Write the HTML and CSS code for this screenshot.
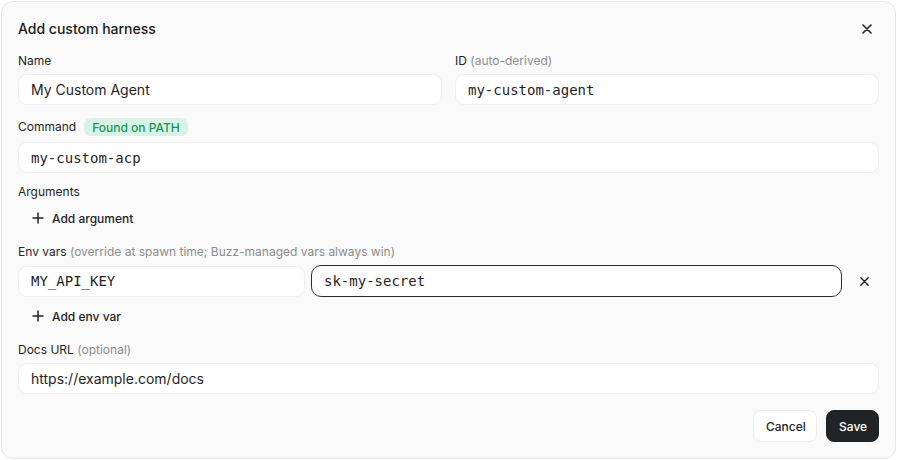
FILE: index.html
```html
<!DOCTYPE html>
<html lang="en">
<head>
<meta charset="utf-8">
<title>Add custom harness</title>
<link rel="stylesheet" href="styles.css">
</head>
<body>
<div class="dialog">
  <div class="header">
    <h2 class="title">Add custom harness</h2>
    <button class="icon-btn close" aria-label="Close">
      <svg width="10" height="10" viewBox="0 0 10 10"><path d="M1 1L9 9M9 1L1 9" stroke="#1f2328" stroke-width="1.6" stroke-linecap="round"/></svg>
    </button>
  </div>

  <div class="row-2 sec-name">
    <div class="field">
      <div class="label-row"><span class="label">Name</span></div>
      <div class="input">My Custom Agent</div>
    </div>
    <div class="field">
      <div class="label-row"><span class="label">ID <span class="muted">(auto-derived)</span></span></div>
      <div class="input mono">my-custom-agent</div>
    </div>
  </div>

  <div class="field sec-command">
    <div class="label-row badge-row"><span class="label">Command</span><span class="badge">Found on PATH</span></div>
    <div class="input mono">my-custom-acp</div>
  </div>

  <div class="field sec-args">
    <div class="label-row"><span class="label">Arguments</span></div>
    <button class="add-btn">
      <svg width="12" height="12" viewBox="0 0 12 12"><path d="M6 0.5V11.5M0.5 6H11.5" stroke="#1f2328" stroke-width="1.5"/></svg>
      <span>Add argument</span>
    </button>
  </div>

  <div class="field sec-env">
    <div class="label-row"><span class="label">Env vars <span class="muted">(override at spawn time; Buzz-managed vars always win)</span></span></div>
    <div class="env-row">
      <div class="input mono env-key">MY_API_KEY</div>
      <div class="input mono env-val focused">sk-my-secret</div>
      <button class="icon-btn remove" aria-label="Remove">
        <svg width="9" height="9" viewBox="0 0 9 9"><path d="M0.8 0.8L8.2 8.2M8.2 0.8L0.8 8.2" stroke="#1f2328" stroke-width="1.4" stroke-linecap="round"/></svg>
      </button>
    </div>
    <button class="add-btn add-env">
      <svg width="12" height="12" viewBox="0 0 12 12"><path d="M6 0.5V11.5M0.5 6H11.5" stroke="#1f2328" stroke-width="1.5"/></svg>
      <span>Add env var</span>
    </button>
  </div>

  <div class="field sec-docs">
    <div class="label-row"><span class="label">Docs URL <span class="muted">(optional)</span></span></div>
    <div class="input">https://example.com/docs</div>
  </div>

  <div class="footer">
    <button class="btn btn-secondary">Cancel</button>
    <button class="btn btn-primary">Save</button>
  </div>
</div>
</body>
</html>
```

FILE: styles.css
```css
* { box-sizing: border-box; }

html, body {
  margin: 0;
  padding: 0;
  background: #ffffff;
}

body {
  font-family: Inter, "Liberation Sans", sans-serif;
  color: #1f2328;
}

.dialog {
  margin: 1px 1px 1px 1px;
  height: 458px;
  border: 1px solid #e6e6e6;
  border-radius: 12px;
  background: #fafafa;
  padding: 17px 16px 16px 16px;
  display: flex;
  flex-direction: column;
}

.header {
  display: flex;
  align-items: center;
  justify-content: space-between;
  height: 20px;
}

.title {
  margin: 0;
  font-size: 14px;
  line-height: 20px;
  font-weight: 500;
  color: #1a1a1a;
}

.icon-btn {
  border: 0;
  background: transparent;
  padding: 0;
  display: flex;
  align-items: center;
  justify-content: center;
  cursor: pointer;
}

.close {
  width: 24px;
  height: 24px;
  margin-right: 0;
}

.row-2 {
  display: grid;
  grid-template-columns: 1fr 1fr;
  column-gap: 13px;
}

.field {
  display: flex;
  flex-direction: column;
}

.sec-name { margin-top: 14px; }
.sec-command { margin-top: 13px; }
.sec-args { margin-top: 11px; }
.sec-env { margin-top: 12px; }
.sec-docs { margin-top: 12px; }

.label-row {
  display: flex;
  align-items: center;
  height: 16px;
  margin-bottom: 5px;
}

.badge-row {
  height: 18px;
  margin-bottom: 6px;
  gap: 8px;
}

.label {
  font-size: 12px;
  line-height: 16px;
  color: #262626;
  white-space: nowrap;
}

.muted {
  color: #8c8c8c;
}

.badge {
  display: inline-flex;
  align-items: center;
  height: 18px;
  padding: 0 8px;
  border-radius: 7px;
  background: #d8f3e5;
  color: #17945b;
  font-size: 12px;
  font-weight: 500;
}

.input {
  height: 31px;
  border: 1px solid #efefef;
  border-radius: 9px;
  background: #ffffff;
  padding: 0 12px;
  display: flex;
  align-items: center;
  font-size: 14px;
  color: #1f2328;
  white-space: nowrap;
}

.mono {
  font-family: "DejaVu Sans Mono", "Liberation Mono", monospace;
  font-size: 14px;
}

.add-btn {
  align-self: flex-start;
  border: 0;
  background: transparent;
  height: 28px;
  margin-top: -1px;
  padding: 0 8px 0 14px;
  display: flex;
  align-items: center;
  gap: 8px;
  font-family: Inter, "Liberation Sans", sans-serif;
  font-size: 12px;
  font-weight: 500;
  color: #1f2328;
  cursor: pointer;
}

.add-env {
  margin-top: 5px;
}

.env-row {
  display: flex;
  align-items: center;
}

.env-key {
  width: 287px;
  flex: none;
}

.env-val {
  flex: 1;
  margin-left: 6px;
}

.focused {
  height: 32px;
  border: 1.5px solid #2a2d31;
  border-radius: 10px;
}

.remove {
  width: 28px;
  height: 28px;
  margin-left: 8px;
  margin-right: 1px;
}

.footer {
  margin-top: auto;
  display: flex;
  justify-content: flex-end;
  gap: 9px;
}

.btn {
  height: 32px;
  border-radius: 8px;
  font-family: Inter, "Liberation Sans", sans-serif;
  font-size: 12px;
  font-weight: 500;
  padding: 0 12px;
  cursor: pointer;
}

.btn-secondary {
  width: 64px;
  background: #ffffff;
  border: 1px solid #ededed;
  color: #1f2328;
}

.btn-primary {
  width: 53px;
  background: #212427;
  border: 1px solid #212427;
  color: #ffffff;
}
```
